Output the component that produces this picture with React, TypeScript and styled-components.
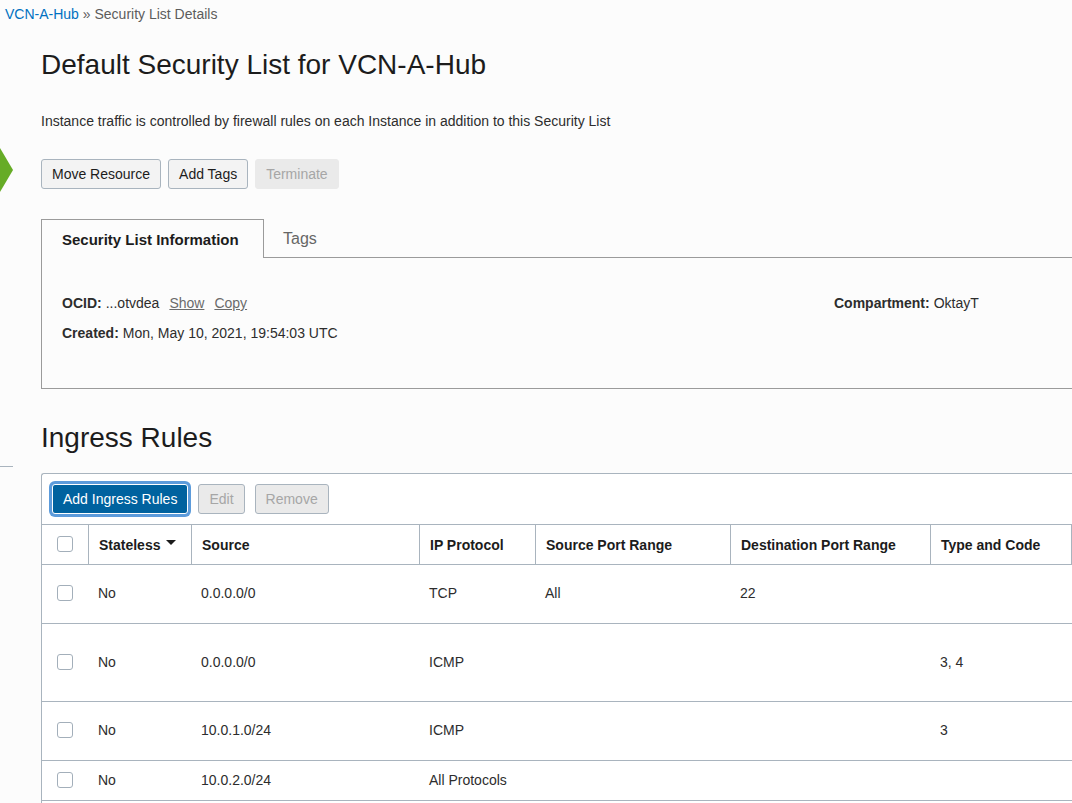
import React from "react";
import styled, { createGlobalStyle } from "styled-components";

const GlobalStyle = createGlobalStyle`
  *, *::before, *::after { box-sizing: border-box; }
  html, body { margin: 0; background: #fcfcfc; }
  body {
    font-family: "Liberation Sans", Helvetica, Arial, sans-serif;
    font-size: 14px;
    line-height: 20px;
    color: #2d2d2d;
  }
  button { font: inherit; }
`;

const Shell = styled.div`
  display: flex;
  flex-direction: column;
  min-height: 100vh;
`;

const Breadcrumb = styled.nav`
  padding: 4px 5px;
  color: #5c5c5c;
`;

const BreadcrumbLink = styled.a`
  color: #0071c1;
  text-decoration: none;
`;

const Body = styled.div`
  display: flex;
  flex: 1;
`;

const Rail = styled.aside`
  flex: none;
  display: flex;
  flex-direction: column;
  width: 13px;
  padding-top: 119px;
`;

const StatusShape = styled.svg`
  display: block;
  width: 13px;
  height: 46px;
`;

const RailDivider = styled.hr`
  width: 100%;
  margin: 273px 0 0;
  border: 0;
  border-top: 1px solid #a9b4be;
`;

const Main = styled.main`
  flex: 1;
  min-width: 0;
  display: flex;
  flex-direction: column;
  padding: 17px 0 0 28px;
`;

const Heading = styled.h1`
  margin: 0;
  font-size: 28px;
  line-height: 40px;
  font-weight: 400;
  color: #1c1c1c;
`;

const Description = styled.p`
  margin: 26px 0 28px;
`;

const Actions = styled.div`
  display: flex;
  gap: 7px;
`;

const Button = styled.button<{ $primary?: boolean; $flat?: boolean }>`
  height: 30px;
  padding: 0 10px;
  border: 1px solid ${(p) => (p.$primary ? "#ffffff" : "#a9b4be")};
  border-radius: 3px;
  background: ${(p) => (p.$primary ? "#00629f" : "#f3f3f3")};
  color: ${(p) => (p.$primary ? "#ffffff" : "#1c1c1c")};
  ${(p) => p.$primary && "box-shadow: 0 0 0 3px #5c9bdb;"}

  &:disabled {
    background: #eaeaea;
    color: #a6a6a6;
    ${(p) => p.$flat && "border-color: #eaeaea;"}
  }
`;

const Tabs = styled.div`
  display: flex;
  margin-top: 30px;
`;

const Tab = styled.button<{ $active?: boolean }>`
  height: 39px;
  text-align: left;
  background: none;
  border: 1px solid transparent;
  ${(p) =>
    p.$active
      ? `
    min-width: 223px;
    padding: 2px 20px 0;
    border-color: #9b9b9b;
    border-bottom: 0;
    font-size: 15px;
    font-weight: 700;
    color: #1c1c1c;
  `
      : `
    flex: 1;
    padding: 0 19px;
    border-width: 1px 0;
    border-bottom-color: #9b9b9b;
    font-size: 16px;
    color: #666666;
  `}
`;

const Panel = styled.section`
  display: grid;
  grid-template-columns: 1fr 238px;
  min-height: 131px;
  padding: 35px 0 40px 20px;
  border: 1px solid #9b9b9b;
  border-width: 0 0 1px 1px;
`;

const Facts = styled.dl`
  display: flex;
  flex-direction: column;
  gap: 10px;
  margin: 0;
`;

const Fact = styled.div`
  display: flex;
  gap: 4px;
`;

const FactLabel = styled.dt`
  font-weight: 700;
`;

const FactValue = styled.dd`
  display: flex;
  gap: 10px;
  margin: 0;
`;

const QuietLink = styled.a`
  color: #6b6b6b;
  text-decoration: underline;
`;

const SectionHeading = styled(Heading).attrs({ as: "h2" })`
  margin-top: 29px;
`;

const TableCard = styled.section`
  flex: 1;
  margin-top: 15px;
  border: 1px solid #a9b4be;
  border-width: 1px 0 0 1px;
  border-top-left-radius: 3px;
  background: #ffffff;
`;

const Toolbar = styled.div`
  display: flex;
  gap: 10px;
  padding: 10px;
`;

const Table = styled.table`
  width: 100%;
  table-layout: fixed;
  border-collapse: separate;
  border-spacing: 0;
`;

const HeadCell = styled.th<{ $width?: number }>`
  ${(p) => p.$width && `width: ${p.$width}px;`}
  height: 41px;
  padding: 0 10px;
  border: 1px solid #a9b4be;
  border-left: 0;
  text-align: left;
  white-space: nowrap;
  font-weight: 700;
  color: #1c1c1c;
`;

const SelectAllCell = styled(HeadCell)`
  padding: 0 15px 2px;
`;

const Row = styled.tr<{ $height: number }>`
  height: ${(p) => p.$height}px;
`;

const Cell = styled.td`
  padding: 0 9px 2px;
  border-bottom: 1px solid #a9b4be;
`;

const SelectCell = styled(Cell)`
  padding: 0 15px 2px;
`;

const SortLabel = styled.span`
  display: flex;
  align-items: center;
  gap: 6px;
`;

const SortArrow = styled.svg`
  width: 10px;
  height: 5px;
  margin-bottom: 4px;
`;

const Checkbox = styled.input.attrs({ type: "checkbox" })`
  appearance: none;
  display: block;
  width: 16px;
  height: 16px;
  margin: 0;
  border: 1px solid #a3afba;
  border-radius: 3px;
  background: #ffffff;

  &:checked { background: #00629f; }
`;

const rules = [
  { source: "0.0.0.0/0", protocol: "TCP", from: "All", to: "22", type: "", height: 59 },
  { source: "0.0.0.0/0", protocol: "ICMP", from: "", to: "", type: "3, 4", height: 78 },
  { source: "10.0.1.0/24", protocol: "ICMP", from: "", to: "", type: "3", height: 59 },
  { source: "10.0.2.0/24", protocol: "All Protocols", from: "", to: "", type: "", height: 40 },
];

export default function App() {
  return (
    <Shell>
      <GlobalStyle />
      <Breadcrumb aria-label="Breadcrumb">
        <BreadcrumbLink href="#vcn">VCN-A-Hub</BreadcrumbLink> » Security List Details
      </Breadcrumb>
      <Body>
        <Rail>
          <StatusShape viewBox="0 0 13 46" aria-hidden="true">
            <path d="M0 1 L13 23 L0 45 Z" fill="#66ac26" />
          </StatusShape>
          <RailDivider />
        </Rail>
        <Main>
          <Heading>Default Security List for VCN-A-Hub</Heading>
          <Description>
            Instance traffic is controlled by firewall rules on each Instance in addition to this Security List
          </Description>
          <Actions>
            <Button>Move Resource</Button>
            <Button>Add Tags</Button>
            <Button disabled $flat>Terminate</Button>
          </Actions>

          <Tabs role="tablist">
            <Tab role="tab" aria-selected="true" $active>Security List Information</Tab>
            <Tab role="tab" aria-selected="false">Tags</Tab>
          </Tabs>
          <Panel role="tabpanel">
            <Facts>
              <Fact>
                <FactLabel>OCID:</FactLabel>
                <FactValue>
                  <span>...otvdea</span>
                  <QuietLink href="#show">Show</QuietLink>
                  <QuietLink href="#copy">Copy</QuietLink>
                </FactValue>
              </Fact>
              <Fact>
                <FactLabel>Created:</FactLabel>
                <FactValue>Mon, May 10, 2021, 19:54:03 UTC</FactValue>
              </Fact>
            </Facts>
            <Facts>
              <Fact>
                <FactLabel>Compartment:</FactLabel>
                <FactValue>OktayT</FactValue>
              </Fact>
            </Facts>
          </Panel>

          <SectionHeading>Ingress Rules</SectionHeading>
          <TableCard>
            <Toolbar>
              <Button $primary>Add Ingress Rules</Button>
              <Button disabled>Edit</Button>
              <Button disabled>Remove</Button>
            </Toolbar>
            <Table>
              <thead>
                <tr>
                  <SelectAllCell $width={47}><Checkbox aria-label="Select all rules" /></SelectAllCell>
                  <HeadCell $width={103} aria-sort="descending">
                    <SortLabel>
                      Stateless
                      <SortArrow viewBox="0 0 10 5" aria-hidden="true">
                        <path d="M0 0 H10 L5 5 Z" fill="#1c1c1c" />
                      </SortArrow>
                    </SortLabel>
                  </HeadCell>
                  <HeadCell $width={228}>Source</HeadCell>
                  <HeadCell $width={116}>IP Protocol</HeadCell>
                  <HeadCell $width={195}>Source Port Range</HeadCell>
                  <HeadCell $width={200}>Destination Port Range</HeadCell>
                  <HeadCell>Type and Code</HeadCell>
                </tr>
              </thead>
              <tbody>
                {rules.map((rule, i) => (
                  <Row key={i} $height={rule.height}>
                    <SelectCell><Checkbox aria-label={`Select rule ${i + 1}`} /></SelectCell>
                    <Cell>No</Cell>
                    <Cell>{rule.source}</Cell>
                    <Cell>{rule.protocol}</Cell>
                    <Cell>{rule.from}</Cell>
                    <Cell>{rule.to}</Cell>
                    <Cell>{rule.type}</Cell>
                  </Row>
                ))}
              </tbody>
            </Table>
          </TableCard>
        </Main>
      </Body>
    </Shell>
  );
}
